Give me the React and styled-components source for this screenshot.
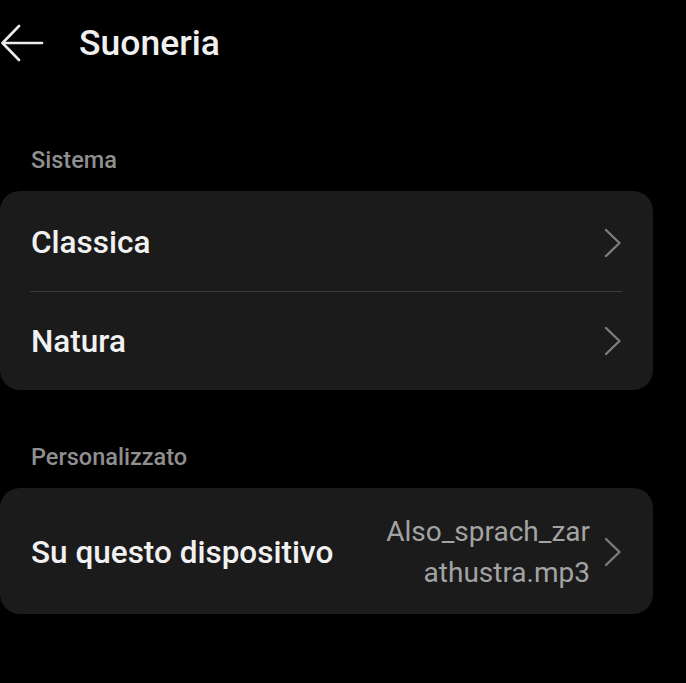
import React from 'react'
import styled, { createGlobalStyle } from 'styled-components'

const Global = createGlobalStyle`
body{
  margin:0;
  background:#000;
  font-family:Roboto, "Noto Sans", sans-serif;
}
`;

const Screen = styled.div`
width:686px;
height:683px;
background:#000;
overflow:hidden;
`;

const Header = styled.div`
height:86px;
display:flex;
align-items:center;
`;

const Back = styled.button`
background:none;
border:none;
padding:0;
margin-left:1px;
width:44px;
height:40px;
display:flex;
align-items:center;
color:#ececec;
`;

const Title = styled.h1`
margin:0 0 0 34px;
font-size:35.5px;
font-weight:500;
color:#f0f0f0;
`;

const SectionLabel = styled.div`
margin-top:${p => p.top}px;
padding:0 0 16px 31px;
line-height:30px;
font-size:23.5px;
font-weight:500;
color:#8f8f8f;
`;

const Card = styled.div`
width:653px;
background:#1b1b1b;
border-radius:20px;
overflow:hidden;
`;

const Row = styled.div`
height:${p => p.h}px;
display:flex;
align-items:center;
padding:${p => p.pt || 0}px 31px 0 31px;
box-sizing:border-box;
`;

const Label = styled.div`
flex:1;
font-size:31.5px;
font-weight:500;
color:#f1f1f1;
`;

const Value = styled.div`
width:204px;
text-align:right;
word-break:break-all;
font-size:28px;
line-height:41px;
color:#a3a3a3;
margin-right:14px;
`;

const Divider = styled.div`
height:1px;
margin:0 31px 0 30px;
background:#3a3a3a;
`;

const Chevron = () => (
  <svg width="18" height="30" viewBox="0 0 18 30">
    <polyline points="2,2 15.5,15 2,28" fill="none" stroke="#7c7c7c" strokeWidth="2.4" strokeLinecap="round" strokeLinejoin="round" />
  </svg>
)

const Arrow = () => (
  <svg width="44" height="40" viewBox="0 0 44 40">
    <polyline points="18,3 1.5,20 18,37" fill="none" stroke="currentColor" strokeWidth="2.6" strokeLinecap="round" strokeLinejoin="round" />
    <line x1="2" y1="20" x2="41" y2="20" stroke="currentColor" strokeWidth="2.6" strokeLinecap="round" />
  </svg>
)

const App = () => {
  return (
    <Screen>
      <Global />
      <Header>
        <Back><Arrow /></Back>
        <Title>Suoneria</Title>
      </Header>

      <SectionLabel top={59}>Sistema</SectionLabel>
      <Card>
        <Row h={100} pt={3}>
          <Label>Classica</Label>
          <Chevron />
        </Row>
        <Divider />
        <Row h={98}>
          <Label>Natura</Label>
          <Chevron />
        </Row>
      </Card>

      <SectionLabel top={52}>Personalizzato</SectionLabel>
      <Card>
        <Row h={126} pt={2}>
          <Label>Su questo dispositivo</Label>
          <Value>Also_sprach_zarathustra.mp3</Value>
          <Chevron />
        </Row>
      </Card>
    </Screen>
  )
}

export default App
